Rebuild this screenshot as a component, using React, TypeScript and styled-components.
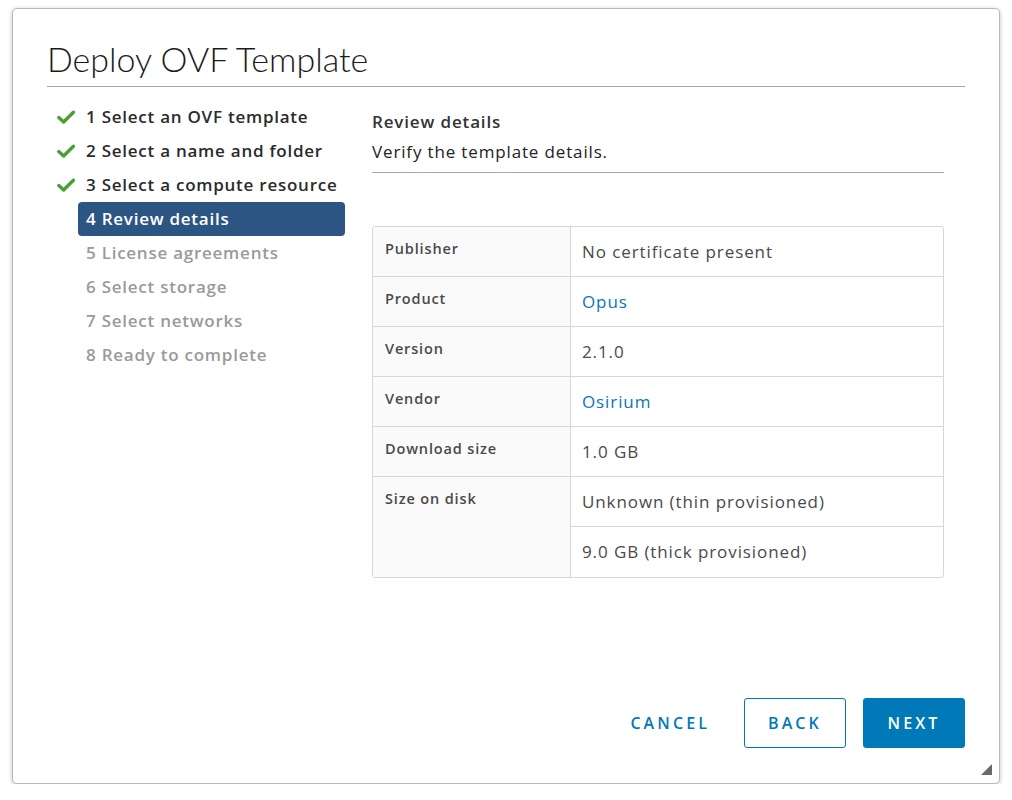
import React from 'react';
import styled, {createGlobalStyle} from 'styled-components';

const GlobalStyle = createGlobalStyle`
  html, body {
    margin: 0;
    padding: 0;
    background: #ffffff;
  }
  body {
    font-family: "Open Sans", "Noto Sans", sans-serif;
    color: #313131;
  }
`;

type Step = {
    num: number;
    label: string;
    state: 'done' | 'active' | 'todo';
};

const steps: Step[] = [
    {num: 1, label: 'Select an OVF template', state: 'done'},
    {num: 2, label: 'Select a name and folder', state: 'done'},
    {num: 3, label: 'Select a compute resource', state: 'done'},
    {num: 4, label: 'Review details', state: 'active'},
    {num: 5, label: 'License agreements', state: 'todo'},
    {num: 6, label: 'Select storage', state: 'todo'},
    {num: 7, label: 'Select networks', state: 'todo'},
    {num: 8, label: 'Ready to complete', state: 'todo'},
];

type Detail = {
    label: string;
    values: string[];
    link?: boolean;
};

const details: Detail[] = [
    {label: 'Publisher', values: ['No certificate present']},
    {label: 'Product', values: ['Opus'], link: true},
    {label: 'Version', values: ['2.1.0']},
    {label: 'Vendor', values: ['Osirium'], link: true},
    {label: 'Download size', values: ['1.0 GB']},
    {label: 'Size on disk', values: ['Unknown (thin provisioned)', '9.0 GB (thick provisioned)']},
];

const Check = () => (
    <svg width="18" height="14" viewBox="0 0 18 14">
        <path d="M1.8 7.6 L6.6 12 L16.4 2.2" fill="none" stroke="#48a233" strokeWidth="3.4" strokeLinecap="round"
              strokeLinejoin="round"/>
    </svg>
);

export default function App() {
    return (
        <>
            <GlobalStyle/>
            <Dialog>
                <Title>Deploy OVF Template</Title>
                <Body>
                    <Nav>
                        {steps.map(step => (
                            <NavItem key={step.num}>
                                <IconSlot>{step.state === 'done' && <Check/>}</IconSlot>
                                <NavLabel state={step.state}>{step.num} {step.label}</NavLabel>
                            </NavItem>
                        ))}
                    </Nav>
                    <Content>
                        <Header>
                            <StepTitle>Review details</StepTitle>
                            <StepDesc>Verify the template details.</StepDesc>
                        </Header>
                        <Table>
                            {details.map(d => (
                                <Row key={d.label}>
                                    <LabelCell>{d.label}</LabelCell>
                                    <Values>
                                        {d.values.map(v => (
                                            <ValueCell key={v} link={d.link}>{v}</ValueCell>
                                        ))}
                                    </Values>
                                </Row>
                            ))}
                        </Table>
                    </Content>
                </Body>
                <Footer>
                    <Button variant="flat">Cancel</Button>
                    <Button variant="outline">Back</Button>
                    <Button variant="primary">Next</Button>
                </Footer>
                <Resize/>
            </Dialog>
        </>
    );
}

const Dialog = styled.div`
  position: relative;
  box-sizing: border-box;
  margin: 8px 12px 0;
  width: 988px;
  height: 776px;
  border: 1px solid #b8b8b8;
  border-radius: 5px;
  box-shadow: 0 1px 4px rgba(0, 0, 0, 0.25);
  background: #fff;
  padding: 30px 34px 35px 34px;
  display: flex;
  flex-direction: column;
`;

const Title = styled.h1`
  margin: 0;
  font-family: "Lato", "Open Sans", sans-serif;
  font-weight: 300;
  font-size: 34px;
  line-height: 40px;
  color: #1b1b1b;
  padding-bottom: 7px;
  border-bottom: 1px solid #a6a6a6;
`;

const Body = styled.div`
  display: flex;
  padding-top: 13px;
`;

const Nav = styled.ul`
  list-style: none;
  margin: 0;
  padding: 0;
  width: 298px;
  flex-shrink: 0;
`;

const NavItem = styled.li`
  display: flex;
  align-items: center;
  height: 34px;
`;

const IconSlot = styled.span`
  width: 31px;
  flex-shrink: 0;
  display: flex;
  justify-content: flex-end;
  padding-right: 3px;
  box-sizing: border-box;
`;

const NavLabel = styled.span<{ state: Step['state'] }>`
  flex: 1;
  min-width: 0;
  height: 34px;
  line-height: 34px;
  padding: 0 8px;
  border-radius: 4px;
  font-size: 17px;
  font-weight: 600;
  letter-spacing: 0.75px;
  white-space: nowrap;
  color: ${p => p.state === 'active' ? '#fff' : p.state === 'done' ? '#2b2b2b' : '#9a9a9a'};
  background: ${p => p.state === 'active' ? '#2d5584' : 'transparent'};
`;

const Content = styled.div`
  flex: 1;
  margin-left: 27px;
  margin-right: 21px;
  padding-top: 10px;
`;

const Header = styled.div`
  border-bottom: 1px solid #a6a6a6;
  padding-bottom: 8px;
`;

const StepTitle = styled.div`
  font-size: 17px;
  font-weight: 600;
  letter-spacing: 0.85px;
  line-height: 24px;
  color: #333;
`;

const StepDesc = styled.div`
  font-size: 17px;
  letter-spacing: 0.85px;
  line-height: 24px;
  margin-top: 6px;
  color: #222;
`;

const Table = styled.div`
  margin-top: 53px;
  border: 1px solid #d7d7d7;
  border-radius: 3px;
  overflow: hidden;
`;

const Row = styled.div`
  display: flex;
  & + & {
    border-top: 1px solid #d7d7d7;
  }
`;

const LabelCell = styled.div`
  width: 198px;
  flex-shrink: 0;
  box-sizing: border-box;
  background: #fafafa;
  border-right: 1px solid #d7d7d7;
  padding: 12px 12px;
  font-size: 14.5px;
  font-weight: 600;
  letter-spacing: 0.85px;
  line-height: 20px;
  color: #4a4a4a;
`;

const Values = styled.div`
  flex: 1;
  display: flex;
  flex-direction: column;
`;

const ValueCell = styled.div<{ link?: boolean }>`
  height: 49px;
  line-height: 49px;
  padding: 0 11px;
  font-size: 17px;
  letter-spacing: 0.9px;
  color: ${p => p.link ? '#0a76b8' : '#4a4a4a'};
  & + & {
    border-top: 1px solid #d7d7d7;
    height: 50px;
  }
`;

const Footer = styled.div`
  margin-top: auto;
  display: flex;
  justify-content: flex-end;
  align-items: center;
  gap: 17px;
`;

const Button = styled.button<{ variant: 'flat' | 'outline' | 'primary' }>`
  height: 50px;
  padding: 0 20px;
  min-width: 102px;
  box-sizing: border-box;
  border-radius: 3px;
  font-family: "Open Sans", sans-serif;
  font-size: 16px;
  font-weight: 600;
  letter-spacing: 3.1px;
  text-transform: uppercase;
  cursor: pointer;
  border: 1px solid ${p => p.variant === 'flat' ? 'transparent' : '#0079b8'};
  background: ${p => p.variant === 'primary' ? '#0079b8' : 'transparent'};
  color: ${p => p.variant === 'primary' ? '#fff' : '#0079b8'};
  margin-right: ${p => p.variant === 'flat' ? '-4px' : '0'};
`;

const Resize = styled.span`
  position: absolute;
  right: 7px;
  bottom: 8px;
  width: 0;
  height: 0;
  border-left: 11px solid transparent;
  border-bottom: 11px solid #6a6a6a;
`;
